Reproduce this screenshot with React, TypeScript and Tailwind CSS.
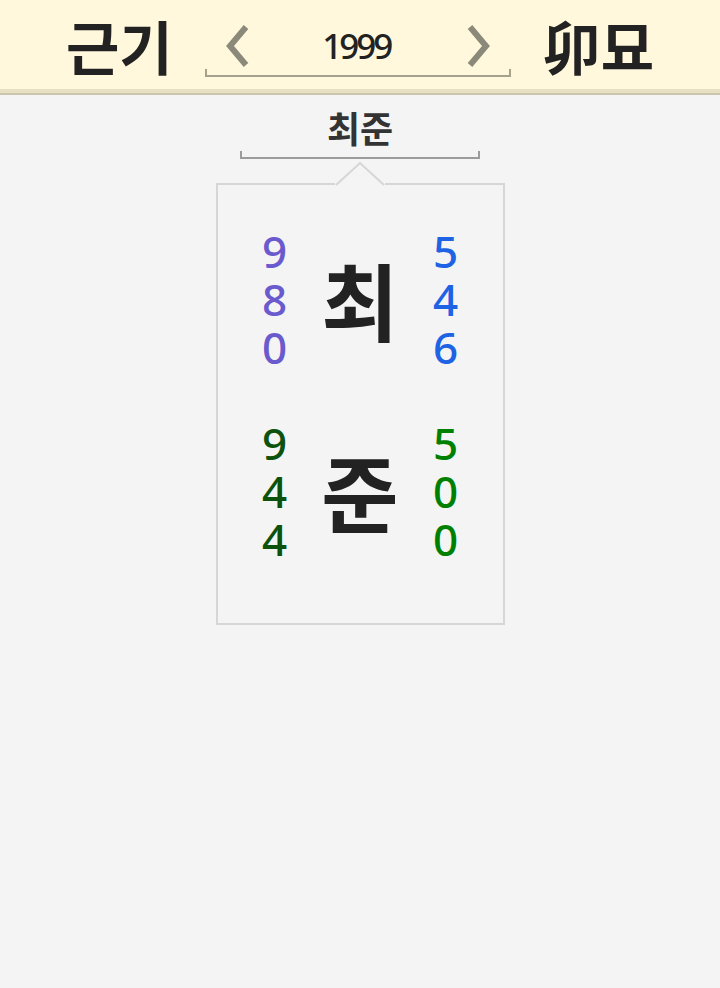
import React from "react";

const KR = { fontFamily: '"Noto Sans CJK KR", "Noto Sans", sans-serif' };
const NUM = { fontFamily: '"Noto Sans", "Liberation Sans", sans-serif' };

function Chevron({ dir }: { dir: "l" | "r" }) {
  return (
    <svg width="26" height="44" viewBox="0 0 26 44">
      {dir === "l" ? (
        <polyline points="22,3 6,22 22,41" fill="none" stroke="#8b897a" strokeWidth="6" strokeLinejoin="miter" />
      ) : (
        <polyline points="4,3 20,22 4,41" fill="none" stroke="#8b897a" strokeWidth="6" strokeLinejoin="miter" />
      )}
    </svg>
  );
}

function Digits({ ds, color }: { ds: string[]; color: string }) {
  return (
    <div className="flex flex-col items-center" style={{ color }}>
      {ds.map((d, i) => (
        <div key={i} className="text-[44px] font-medium leading-[48px] h-[48px]" style={NUM}>
          {d}
        </div>
      ))}
    </div>
  );
}

function Group({ left, right, lc, rc, ch }: { left: string[]; right: string[]; lc: string; rc: string; ch: string }) {
  return (
    <div className="grid grid-cols-[60px_1fr_60px] items-center">
      <Digits ds={left} color={lc} />
      <div className="flex justify-center text-[84px] leading-none font-bold text-[#222]" style={KR}>
        {ch}
      </div>
      <Digits ds={right} color={rc} />
    </div>
  );
}

export default function App() {
  return (
    <div className="min-h-[988px] w-[720px] bg-[#f4f4f4]">
      <div className="h-[93px] bg-[#fff8dc] flex items-center justify-center gap-[32px] border-b-[4px] border-[#e8e0c2]">
        <div className="text-[58px] font-bold text-[#222] leading-none" style={KR}>근기</div>
        <div className="w-[306px] flex flex-col mt-[10px]">
          <div className="flex items-center justify-between px-[19px] h-[46px]">
            <Chevron dir="l" />
            <div className="text-[35px] font-medium leading-none text-[#222] tracking-[-3px] pr-[3px]" style={NUM}>1999</div>
            <Chevron dir="r" />
          </div>
          <div className="h-[8px] border-x-2 border-b-2 border-[#a4a28c]" />
        </div>
        <div className="text-[58px] font-bold text-[#222] leading-none" style={KR}>卯묘</div>
      </div>
      <div className="h-[2px] bg-[#cbc5ae]" />
      <div className="flex flex-col items-center">
        <div className="mt-[8px] text-[36px] font-bold leading-[48px] text-[#333]" style={KR}>최준</div>
        <div className="w-[240px] h-[8px] border-x-2 border-b-2 border-[#9c9c9c]" />
        <div className="relative mt-[24px] w-[289px] border-2 border-[#d6d6d6] px-[27px] pt-[42px] pb-[60px] flex flex-col gap-[48px]">
          <svg className="absolute left-[116px] -top-[24px]" width="52" height="26" viewBox="0 0 52 26">
            <rect x="1" y="22" width="50" height="4" fill="#f4f4f4" />
            <polyline points="2,24 26,2 50,24" fill="none" stroke="#d6d6d6" strokeWidth="2" />
          </svg>
          <Group left={["9", "8", "0"]} right={["5", "4", "6"]} lc="#6a5acd" rc="#1e63e4" ch="최" />
          <Group left={["9", "4", "4"]} right={["5", "0", "0"]} lc="#0c520c" rc="#008000" ch="준" />
        </div>
      </div>
    </div>
  );
}
